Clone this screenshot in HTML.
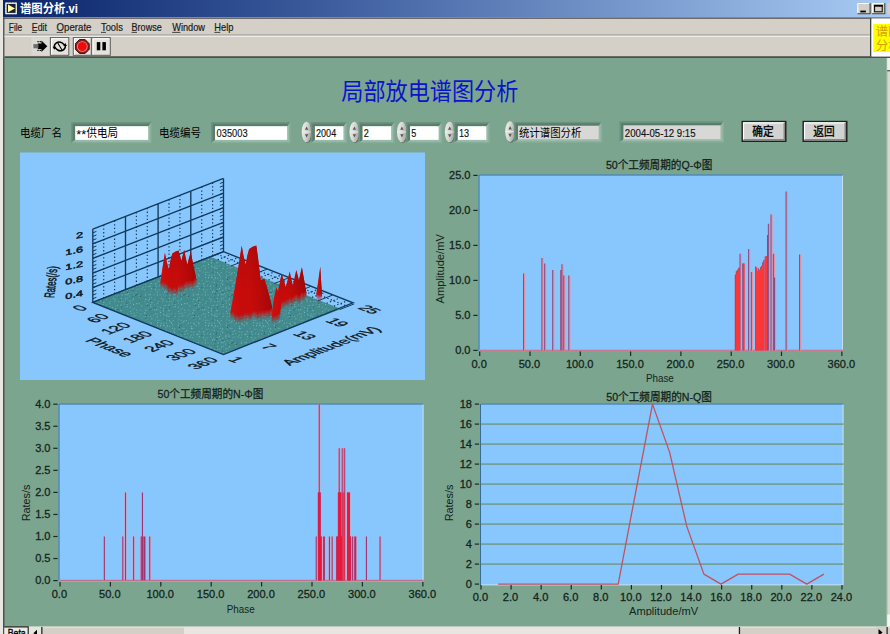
<!DOCTYPE html>
<html><head><meta charset="utf-8"><title>LabVIEW</title>
<style>
html,body{margin:0;padding:0;width:890px;height:634px;overflow:hidden;background:#7ca58f;}
svg{display:block;font-family:"Liberation Sans",sans-serif;}
</style></head><body>
<svg width="890" height="634" viewBox="0 0 890 634">
<rect x="0" y="0" width="890" height="634" fill="#7ca58f"/><rect x="0" y="0" width="890" height="58" fill="#d4d0c8"/><rect x="0" y="0" width="3" height="634" fill="#e8e6e0"/><defs><linearGradient id="tb" x1="0" x2="1" y1="0" y2="0"><stop offset="0" stop-color="#0a246a"/><stop offset="0.35" stop-color="#3a5a9c"/><stop offset="1" stop-color="#a8ccf4"/></linearGradient></defs><rect x="3" y="0" width="887" height="17" fill="url(#tb)"/><rect x="3" y="17.5" width="887" height="1.2" fill="#404040"/><rect x="3.2" y="17.5" width="1.2" height="634" fill="#404040"/><rect x="4.5" y="34.6" width="866" height="1" fill="#808080"/><rect x="4.5" y="35.6" width="866" height="1" fill="#ffffff"/><rect x="4.5" y="56.3" width="890" height="1.6" fill="#404040"/><rect x="870" y="18.5" width="1.5" height="38" fill="#404040"/><rect x="871.5" y="18.5" width="20" height="38" fill="#ffffff"/><rect x="873.2" y="24" width="20" height="28" fill="#ffff00"/><text x="875.8" y="35.8" font-size="12.5" fill="#d8a000" font-family="'Liberation Sans','Noto Sans CJK SC',sans-serif">谱图</text><text x="875.8" y="49.6" font-size="12.5" fill="#d8a000" font-family="'Liberation Sans','Noto Sans CJK SC',sans-serif">分析</text><rect x="5.3" y="2.6" width="11.6" height="11.6" fill="#f0ecd0"/><rect x="6.6" y="3.9" width="9.0" height="9.0" fill="#1c1c30"/><rect x="5.8" y="3.1" width="10.6" height="10.6" fill="none" stroke="#f0ecd0" stroke-width="1" stroke-dasharray="2 1"/><path d="M8.0 4.6 L15.0 8.4 L8.0 12.2 Z" fill="#ffffa8"/><text transform="translate(20.00,13.30) scale(1,1.06)" x="0" y="0" font-size="11.5" font-weight="bold" fill="#fff" font-family="'Liberation Sans','Noto Sans CJK SC',sans-serif" textLength="58" lengthAdjust="spacingAndGlyphs">谱图分析.vi</text><rect x="857.3" y="3" width="13.2" height="11.2" fill="#d4d0c8"/><path d="M857.8 14.2 V3.5 H870.5" fill="none" stroke="#fff" stroke-width="1"/><path d="M857.3 13.8 H870.0999999999999 V3" fill="none" stroke="#404040" stroke-width="1.1"/><rect x="860.3" y="10.6" width="5.6" height="1.8" fill="#000"/><rect x="872" y="3" width="13.2" height="11.2" fill="#d4d0c8"/><path d="M872.5 14.2 V3.5 H885.2" fill="none" stroke="#fff" stroke-width="1"/><path d="M872 13.8 H884.8 V3" fill="none" stroke="#404040" stroke-width="1.1"/><rect x="874.6" y="5.4" width="7.6" height="6.4" fill="none" stroke="#000" stroke-width="1"/><rect x="874.1" y="4.9" width="8.6" height="1.8" fill="#000"/><rect x="887.5" y="3" width="3" height="11.2" fill="#d4d0c8"/><text x="8.85" y="30.6" font-size="10.6" fill="#1a1a1a" stroke="#1a1a1a" stroke-width="0.2" textLength="13.4" lengthAdjust="spacingAndGlyphs">File</text><rect x="8.85" y="31.9" width="4.6" height="0.9" fill="#333"/><text x="31.8" y="30.6" font-size="10.6" fill="#1a1a1a" stroke="#1a1a1a" stroke-width="0.2" textLength="15.2" lengthAdjust="spacingAndGlyphs">Edit</text><rect x="31.8" y="31.9" width="5.0" height="0.9" fill="#333"/><text x="56.6" y="30.6" font-size="10.6" fill="#1a1a1a" stroke="#1a1a1a" stroke-width="0.2" textLength="34.9" lengthAdjust="spacingAndGlyphs">Operate</text><rect x="56.6" y="31.9" width="6.6" height="0.9" fill="#333"/><text x="101" y="30.6" font-size="10.6" fill="#1a1a1a" stroke="#1a1a1a" stroke-width="0.2" textLength="21.8" lengthAdjust="spacingAndGlyphs">Tools</text><rect x="101" y="31.9" width="5.0" height="0.9" fill="#333"/><text x="131.6" y="30.6" font-size="10.6" fill="#1a1a1a" stroke="#1a1a1a" stroke-width="0.2" textLength="30.1" lengthAdjust="spacingAndGlyphs">Browse</text><rect x="131.6" y="31.9" width="5.4" height="0.9" fill="#333"/><text x="172.2" y="30.6" font-size="10.6" fill="#1a1a1a" stroke="#1a1a1a" stroke-width="0.2" textLength="32.8" lengthAdjust="spacingAndGlyphs">Window</text><rect x="172.2" y="31.9" width="8.2" height="0.9" fill="#333"/><text x="214.3" y="30.6" font-size="10.6" fill="#1a1a1a" stroke="#1a1a1a" stroke-width="0.2" textLength="19.2" lengthAdjust="spacingAndGlyphs">Help</text><rect x="214.3" y="31.9" width="6.0" height="0.9" fill="#333"/><rect x="31.6" y="37.6" width="17.8" height="17.6" fill="#dcd9d2"/><path d="M37.8 43.4 h3.6 v-3.0 l5.9 5.8 l-5.9 5.8 v-3.0 h-3.6 z" fill="#000"/><path d="M37.4 41.6 h3.6 M37.4 50.4 h3.6" stroke="#000" stroke-width="1.2" stroke-dasharray="1.3 0.9"/><rect x="33.4" y="44.1" width="5" height="4.2" fill="#6c6c6c"/><rect x="50.4" y="37.6" width="18.4" height="17.7" fill="#e6e3dc" stroke="#5c5c5c" stroke-width="1"/><path d="M51.6 54.4 V38.8 H67.8" fill="none" stroke="#fff" stroke-width="1.1"/><g transform="translate(59.8,46.4)" fill="none" stroke="#000" stroke-width="1.5"><path d="M-5.6 0.6 C-5.6 -3.6 -1.4 -5.6 2.2 -3.6 L5.2 -1.0"/><path d="M5.6 -0.6 C5.6 3.6 1.4 5.6 -2.2 3.6 L-5.2 1.0"/><path d="M-2.6 -4.4 L2.6 4.4" stroke-width="1.1"/><path d="M-7.2 0.4 l1.7 2.9 l2 -2.9 z M7.2 -0.4 l-1.7 -2.9 l-2 2.9 z" fill="#000" stroke="none"/></g><rect x="73.3" y="37.6" width="18" height="17.7" fill="#e6e3dc" stroke="#5c5c5c" stroke-width="1"/><path d="M74.5 54.4 V38.8 H90.3" fill="none" stroke="#fff" stroke-width="1.1"/><path d="M79.45 39.6 h5.7 l4.05 4.05 v5.7 l-4.05 4.05 h-5.7 l-4.05 -4.05 v-5.7 z" fill="#8c2020" stroke="#3c1010" stroke-width="1"/><circle cx="82.3" cy="46.5" r="5.3" fill="#d89890"/><circle cx="82.3" cy="46.5" r="4.5" fill="#f00a0a"/><rect x="91.8" y="37.6" width="18.5" height="17.7" fill="#e6e3dc" stroke="#5c5c5c" stroke-width="1"/><path d="M93.0 54.4 V38.8 H109.3" fill="none" stroke="#fff" stroke-width="1.1"/><rect x="96.8" y="42.1" width="3.5" height="8.2" fill="#000"/><rect x="102.4" y="42.1" width="3.5" height="8.2" fill="#000"/><rect x="887.2" y="58" width="4" height="634" fill="#d6d8d0"/><rect x="886.4" y="58" width="0.9" height="634" fill="#a4c0b0"/><rect x="887.2" y="58" width="3" height="12.3" fill="#eeeeea"/><rect x="887.2" y="70.2" width="3" height="1.1" fill="#404040"/><rect x="887.2" y="614.5" width="3" height="12" fill="#f4f4f0"/><rect x="4.5" y="626.6" width="890" height="8" fill="#d4d0c8"/><rect x="28" y="626.6" width="890" height="0.9" fill="#ecebe6"/><rect x="184" y="627.2" width="555" height="7" fill="#e9e6e1"/><rect x="4.5" y="627.4" width="23.6" height="8" fill="#ecebe6"/><path d="M4.2 626.9 H28.2 V635" fill="none" stroke="#2a2a2a" stroke-width="1.2"/><text x="7.7" y="636.8" font-size="10.8" fill="#000" stroke="#000" stroke-width="0.35" textLength="18.0" lengthAdjust="spacingAndGlyphs">Beta</text><rect x="29" y="627.2" width="12" height="8" fill="#e4e6e0"/><rect x="41.2" y="627" width="1.3" height="8" fill="#2a2a2a"/><path d="M37 629.8 l-3.6 3.4 l3.6 3.4 z" fill="#000"/><rect x="738.8" y="627" width="1.3" height="7.5" fill="#202020"/><rect x="876" y="627" width="11" height="7.5" fill="#d4d0c8"/><path d="M878.5 629 l4 3.5 l-4 3.5 z" fill="#000"/><rect x="886.5" y="627" width="1.2" height="7.5" fill="#202020"/><defs><linearGradient id="spg" x1="0" x2="1" y1="0" y2="0.3"><stop offset="0" stop-color="#f2f2f0"/><stop offset="0.55" stop-color="#d6d6d2"/><stop offset="1" stop-color="#a8aaa6"/></linearGradient></defs><text transform="translate(341.30,100.00) scale(1,1.1)" x="0" y="0" font-size="22" fill="#0a14cc" font-family="'Liberation Sans','Noto Sans CJK SC',sans-serif" textLength="177" lengthAdjust="spacingAndGlyphs">局部放电谱图分析</text><text transform="translate(20.00,137.00) scale(1,1.13)" x="0" y="0" font-size="10.5" fill="#000" font-family="'Liberation Sans','Noto Sans CJK SC',sans-serif">电缆厂名</text><path d="M71.9 142.5 L71.9 122.9 L150.89999999999998 122.9 L148.2 126.2 L75.2 126.2 L75.2 139.9 Z" fill="#587e6e"/><path d="M71.9 142.5 L150.89999999999998 142.5 L150.89999999999998 122.9 L148.2 126.2 L148.2 139.9 L75.2 139.9 Z" fill="#98bca9"/><path d="M71.9 142.5 V122.9 H150.89999999999998" fill="none" stroke="#6c937f" stroke-width="1.6"/><path d="M71.9 142.5 H150.89999999999998 V122.9" fill="none" stroke="#86ad99" stroke-width="1.6"/><rect x="75.2" y="126.2" width="73" height="13.7" fill="#fff"/><text x="76.3" y="139.2" font-size="12.8" fill="#000">**</text><text transform="translate(86.60,137.00) scale(1,1.13)" x="0" y="0" font-size="10.5" fill="#000" font-family="'Liberation Sans','Noto Sans CJK SC',sans-serif">供电局</text><text transform="translate(159.00,137.00) scale(1,1.13)" x="0" y="0" font-size="10.5" fill="#000" font-family="'Liberation Sans','Noto Sans CJK SC',sans-serif">电缆编号</text><path d="M211.79999999999998 142.5 L211.79999999999998 122.9 L289.9 122.9 L287.2 126.2 L215.1 126.2 L215.1 139.9 Z" fill="#587e6e"/><path d="M211.79999999999998 142.5 L289.9 142.5 L289.9 122.9 L287.2 126.2 L287.2 139.9 L215.1 139.9 Z" fill="#98bca9"/><path d="M211.79999999999998 142.5 V122.9 H289.9" fill="none" stroke="#6c937f" stroke-width="1.6"/><path d="M211.79999999999998 142.5 H289.9 V122.9" fill="none" stroke="#86ad99" stroke-width="1.6"/><rect x="215.1" y="126.2" width="72.1" height="13.7" fill="#fff"/><text x="216.6" y="136.9" font-size="11.2" fill="#111" stroke="#111" stroke-width="0.15" textLength="31" lengthAdjust="spacingAndGlyphs">035003</text><ellipse cx="307.29999999999995" cy="132.8" rx="4.9" ry="10.3" fill="#4e6a5e"/><ellipse cx="306.59999999999997" cy="132.0" rx="4.9" ry="10.3" fill="url(#spg)"/><path d="M304.9 129.8 l1.7 -3.4 l1.7 3.4 z M304.9 134.2 l1.7 3.4 l1.7 -3.4 z" fill="#585858"/><path d="M302.2 132.0 h8.8" stroke="#f4f4f4" stroke-width="0.8"/><path d="M311.59999999999997 142.5 L311.59999999999997 122.9 L346.2 122.9 L343.5 126.2 L314.9 126.2 L314.9 139.9 Z" fill="#587e6e"/><path d="M311.59999999999997 142.5 L346.2 142.5 L346.2 122.9 L343.5 126.2 L343.5 139.9 L314.9 139.9 Z" fill="#98bca9"/><path d="M311.59999999999997 142.5 V122.9 H346.2" fill="none" stroke="#6c937f" stroke-width="1.6"/><path d="M311.59999999999997 142.5 H346.2 V122.9" fill="none" stroke="#86ad99" stroke-width="1.6"/><rect x="314.9" y="126.2" width="28.6" height="13.7" fill="#fff"/><text x="316.0" y="136.9" font-size="11.2" fill="#111" stroke="#111" stroke-width="0.15" textLength="20.2" lengthAdjust="spacingAndGlyphs">2004</text><ellipse cx="355.09999999999997" cy="132.8" rx="4.9" ry="10.3" fill="#4e6a5e"/><ellipse cx="354.4" cy="132.0" rx="4.9" ry="10.3" fill="url(#spg)"/><path d="M352.7 129.8 l1.7 -3.4 l1.7 3.4 z M352.7 134.2 l1.7 3.4 l1.7 -3.4 z" fill="#585858"/><path d="M350.0 132.0 h8.8" stroke="#f4f4f4" stroke-width="0.8"/><path d="M359.3 142.5 L359.3 122.9 L393.90000000000003 122.9 L391.20000000000005 126.2 L362.6 126.2 L362.6 139.9 Z" fill="#587e6e"/><path d="M359.3 142.5 L393.90000000000003 142.5 L393.90000000000003 122.9 L391.20000000000005 126.2 L391.20000000000005 139.9 L362.6 139.9 Z" fill="#98bca9"/><path d="M359.3 142.5 V122.9 H393.90000000000003" fill="none" stroke="#6c937f" stroke-width="1.6"/><path d="M359.3 142.5 H393.90000000000003 V122.9" fill="none" stroke="#86ad99" stroke-width="1.6"/><rect x="362.6" y="126.2" width="28.6" height="13.7" fill="#fff"/><text x="363.70000000000005" y="136.9" font-size="11.2" fill="#111" stroke="#111" stroke-width="0.15" textLength="5.05" lengthAdjust="spacingAndGlyphs">2</text><ellipse cx="402.59999999999997" cy="132.8" rx="4.9" ry="10.3" fill="#4e6a5e"/><ellipse cx="401.9" cy="132.0" rx="4.9" ry="10.3" fill="url(#spg)"/><path d="M400.2 129.8 l1.7 -3.4 l1.7 3.4 z M400.2 134.2 l1.7 3.4 l1.7 -3.4 z" fill="#585858"/><path d="M397.5 132.0 h8.8" stroke="#f4f4f4" stroke-width="0.8"/><path d="M406.8 142.5 L406.8 122.9 L441.40000000000003 122.9 L438.70000000000005 126.2 L410.1 126.2 L410.1 139.9 Z" fill="#587e6e"/><path d="M406.8 142.5 L441.40000000000003 142.5 L441.40000000000003 122.9 L438.70000000000005 126.2 L438.70000000000005 139.9 L410.1 139.9 Z" fill="#98bca9"/><path d="M406.8 142.5 V122.9 H441.40000000000003" fill="none" stroke="#6c937f" stroke-width="1.6"/><path d="M406.8 142.5 H441.40000000000003 V122.9" fill="none" stroke="#86ad99" stroke-width="1.6"/><rect x="410.1" y="126.2" width="28.6" height="13.7" fill="#fff"/><text x="411.20000000000005" y="136.9" font-size="11.2" fill="#111" stroke="#111" stroke-width="0.15" textLength="5.05" lengthAdjust="spacingAndGlyphs">5</text><ellipse cx="450.4" cy="132.8" rx="4.9" ry="10.3" fill="#4e6a5e"/><ellipse cx="449.7" cy="132.0" rx="4.9" ry="10.3" fill="url(#spg)"/><path d="M448.0 129.8 l1.7 -3.4 l1.7 3.4 z M448.0 134.2 l1.7 3.4 l1.7 -3.4 z" fill="#585858"/><path d="M445.3 132.0 h8.8" stroke="#f4f4f4" stroke-width="0.8"/><path d="M454.5 142.5 L454.5 122.9 L489.1 122.9 L486.40000000000003 126.2 L457.8 126.2 L457.8 139.9 Z" fill="#587e6e"/><path d="M454.5 142.5 L489.1 142.5 L489.1 122.9 L486.40000000000003 126.2 L486.40000000000003 139.9 L457.8 139.9 Z" fill="#98bca9"/><path d="M454.5 142.5 V122.9 H489.1" fill="none" stroke="#6c937f" stroke-width="1.6"/><path d="M454.5 142.5 H489.1 V122.9" fill="none" stroke="#86ad99" stroke-width="1.6"/><rect x="457.8" y="126.2" width="28.6" height="13.7" fill="#fff"/><text x="458.90000000000003" y="136.9" font-size="11.2" fill="#111" stroke="#111" stroke-width="0.15" textLength="10.1" lengthAdjust="spacingAndGlyphs">13</text><ellipse cx="510.79999999999995" cy="132.4" rx="4.9" ry="10.3" fill="#4e6a5e"/><ellipse cx="510.09999999999997" cy="131.6" rx="4.9" ry="10.3" fill="url(#spg)"/><path d="M508.4 129.4 l1.7 -3.4 l1.7 3.4 z M508.4 133.79999999999998 l1.7 3.4 l1.7 -3.4 z" fill="#585858"/><path d="M505.7 131.6 h8.8" stroke="#f4f4f4" stroke-width="0.8"/><path d="M514.7 142.0 L514.7 122.5 L601.5 122.5 L598.8 125.8 L518 125.8 L518 139.4 Z" fill="#587e6e"/><path d="M514.7 142.0 L601.5 142.0 L601.5 122.5 L598.8 125.8 L598.8 139.4 L518 139.4 Z" fill="#98bca9"/><path d="M514.7 142.0 V122.5 H601.5" fill="none" stroke="#6c937f" stroke-width="1.6"/><path d="M514.7 142.0 H601.5 V122.5" fill="none" stroke="#86ad99" stroke-width="1.6"/><rect x="518" y="125.8" width="80.8" height="13.6" fill="#d8d8d6"/><text transform="translate(519.00,137.00) scale(1,1.13)" x="0" y="0" font-size="10.4" fill="#000" font-family="'Liberation Sans','Noto Sans CJK SC',sans-serif">统计谱图分析</text><path d="M620.2 141.9 L620.2 122.10000000000001 L723.3000000000001 122.10000000000001 L720.6 125.4 L623.5 125.4 L623.5 139.3 Z" fill="#587e6e"/><path d="M620.2 141.9 L723.3000000000001 141.9 L723.3000000000001 122.10000000000001 L720.6 125.4 L720.6 139.3 L623.5 139.3 Z" fill="#98bca9"/><path d="M620.2 141.9 V122.10000000000001 H723.3000000000001" fill="none" stroke="#6c937f" stroke-width="1.6"/><path d="M620.2 141.9 H723.3000000000001 V122.10000000000001" fill="none" stroke="#86ad99" stroke-width="1.6"/><rect x="623.5" y="125.4" width="97.1" height="13.9" fill="#d8d8d6"/><text x="624.8" y="136.7" font-size="11.2" fill="#111" stroke="#111" stroke-width="0.15" textLength="70.8" lengthAdjust="spacingAndGlyphs">2004-05-12 9:15</text><rect x="741.5" y="120.8" width="45" height="21.2" fill="#202020"/><rect x="743" y="122.3" width="42" height="18.2" fill="#d2d2d0"/><path d="M743.5 140.0 V122.8 H784.5" fill="none" stroke="#fff" stroke-width="1.2"/><path d="M743.5 139.8 H784.3 V122.8" fill="none" stroke="#888" stroke-width="1.6"/><text transform="translate(752.20,136.00) scale(1,1.12)" x="0" y="0" font-size="10.7" fill="#000" stroke="#000" stroke-width="0.3" font-family="'Liberation Sans','Noto Sans CJK SC',sans-serif">确定</text><rect x="802.5" y="120.8" width="45" height="21.2" fill="#202020"/><rect x="804" y="122.3" width="42" height="18.2" fill="#d2d2d0"/><path d="M804.5 140.0 V122.8 H845.5" fill="none" stroke="#fff" stroke-width="1.2"/><path d="M804.5 139.8 H845.3 V122.8" fill="none" stroke="#888" stroke-width="1.6"/><text transform="translate(813.20,136.00) scale(1,1.12)" x="0" y="0" font-size="10.7" fill="#000" stroke="#000" stroke-width="0.3" font-family="'Liberation Sans','Noto Sans CJK SC',sans-serif">返回</text><rect x="478.5" y="174.5" width="364.5" height="176.3" fill="#88c7fe"/><path d="M479.0 350.8 V175.0 H843" fill="none" stroke="#376c92" stroke-width="1"/><path d="M479.5 350.3 H842.5 V175.5" fill="none" stroke="#c4dcf0" stroke-width="1"/><text transform="translate(605.89,169.00) scale(1,1.08)" x="0" y="0" font-size="10.3" fill="#14241c" stroke="#14241c" stroke-width="0.25" font-family="'Liberation Sans','Noto Sans CJK SC',sans-serif" textLength="106.4" lengthAdjust="spacingAndGlyphs">50个工频周期的Q-Φ图</text><rect x="479.7" y="349.59999999999997" width="363.3" height="1.5" fill="#c87a90"/><path d="M523.06 350.4V273.4h2.1V350.4zM541.47 350.4V258.0h2.1V350.4zM544.19 350.4V263.6h2.1V350.4zM552.24 350.4V269.9h2.1V350.4zM560.29 350.4V269.9h2.1V350.4zM561.49 350.4V264.3h2.1V350.4zM563.30 350.4V275.5h2.1V350.4zM568.33 350.4V275.5h2.1V350.4zM734.83 350.4V274.8h2.1V350.4zM735.83 350.4V271.3h2.1V350.4zM736.84 350.4V269.9h2.1V350.4zM737.85 350.4V268.5h2.1V350.4zM738.65 350.4V267.8h2.1V350.4zM739.56 350.4V253.8h2.1V350.4zM742.27 350.4V263.6h2.1V350.4zM743.28 350.4V263.6h2.1V350.4zM748.11 350.4V248.9h2.1V350.4zM750.92 350.4V272.0h2.1V350.4zM755.15 350.4V266.4h2.1V350.4zM756.15 350.4V267.8h2.1V350.4zM757.16 350.4V271.3h2.1V350.4zM758.17 350.4V268.5h2.1V350.4zM759.17 350.4V269.9h2.1V350.4zM760.18 350.4V267.1h2.1V350.4zM761.18 350.4V265.7h2.1V350.4zM762.19 350.4V262.2h2.1V350.4zM763.30 350.4V260.1h2.1V350.4zM764.71 350.4V256.6h2.1V350.4zM765.91 350.4V255.9h2.1V350.4zM767.02 350.4V234.9h2.1V350.4zM767.92 350.4V223.7h2.1V350.4zM770.54 350.4V214.6h2.1V350.4zM772.95 350.4V253.8h2.1V350.4zM774.06 350.4V277.6h2.1V350.4zM785.63 350.4V191.5h2.1V350.4zM799.11 350.4V254.5h2.1V350.4z" fill="#ea8ea2" opacity="1"/><path d="M523.01 350.4V273.4h1.0V350.4zM541.42 350.4V258.0h1.0V350.4zM544.14 350.4V263.6h1.0V350.4zM552.19 350.4V269.9h1.0V350.4zM560.24 350.4V269.9h1.0V350.4zM561.44 350.4V264.3h1.0V350.4zM563.25 350.4V275.5h1.0V350.4zM568.28 350.4V275.5h1.0V350.4zM734.78 350.4V274.8h1.0V350.4zM735.78 350.4V271.3h1.0V350.4zM736.79 350.4V269.9h1.0V350.4zM737.79 350.4V268.5h1.0V350.4zM738.60 350.4V267.8h1.0V350.4zM739.51 350.4V253.8h1.0V350.4zM742.22 350.4V263.6h1.0V350.4zM743.23 350.4V263.6h1.0V350.4zM748.06 350.4V248.9h1.0V350.4zM750.87 350.4V272.0h1.0V350.4zM755.10 350.4V266.4h1.0V350.4zM756.10 350.4V267.8h1.0V350.4zM757.11 350.4V271.3h1.0V350.4zM758.12 350.4V268.5h1.0V350.4zM759.12 350.4V269.9h1.0V350.4zM760.13 350.4V267.1h1.0V350.4zM761.13 350.4V265.7h1.0V350.4zM762.14 350.4V262.2h1.0V350.4zM763.25 350.4V260.1h1.0V350.4zM764.66 350.4V256.6h1.0V350.4zM765.86 350.4V255.9h1.0V350.4zM766.97 350.4V234.9h1.0V350.4zM767.87 350.4V223.7h1.0V350.4zM770.49 350.4V214.6h1.0V350.4zM772.90 350.4V253.8h1.0V350.4zM774.01 350.4V277.6h1.0V350.4zM785.58 350.4V191.5h1.0V350.4zM799.06 350.4V254.5h1.0V350.4z" fill="#805088" opacity="1"/><path d="M735.66 350.4V274.1h1.35V350.4zM736.66 350.4V271.3h1.35V350.4zM737.67 350.4V269.9h1.35V350.4zM738.57 350.4V268.5h1.35V350.4zM743.10 350.4V263.6h1.35V350.4zM755.98 350.4V267.8h1.35V350.4zM756.98 350.4V271.3h1.35V350.4zM757.99 350.4V271.3h1.35V350.4zM758.99 350.4V269.9h1.35V350.4zM760.00 350.4V269.9h1.35V350.4zM761.01 350.4V267.1h1.35V350.4zM762.01 350.4V265.7h1.35V350.4zM763.02 350.4V262.2h1.35V350.4zM765.63 350.4V256.6h1.35V350.4z" fill="#ff3636" opacity="1"/><rect x="479.10" y="351.5" width="1.2" height="4.5" fill="#1a2a22"/><text x="0" y="0" font-size="11.5" fill="#14241c" text-anchor="middle" stroke="#14241c" stroke-width="0.3" transform="translate(479.1,367.5) scale(0.96,1)">0.0</text><rect x="529.40" y="351.5" width="1.2" height="4.5" fill="#1a2a22"/><text x="0" y="0" font-size="11.5" fill="#14241c" text-anchor="middle" stroke="#14241c" stroke-width="0.3" transform="translate(529.4,367.5) scale(0.96,1)">50.0</text><rect x="579.70" y="351.5" width="1.2" height="4.5" fill="#1a2a22"/><text x="0" y="0" font-size="11.5" fill="#14241c" text-anchor="middle" stroke="#14241c" stroke-width="0.3" transform="translate(579.7,367.5) scale(0.96,1)">100.0</text><rect x="630.00" y="351.5" width="1.2" height="4.5" fill="#1a2a22"/><text x="0" y="0" font-size="11.5" fill="#14241c" text-anchor="middle" stroke="#14241c" stroke-width="0.3" transform="translate(630.0,367.5) scale(0.96,1)">150.0</text><rect x="680.30" y="351.5" width="1.2" height="4.5" fill="#1a2a22"/><text x="0" y="0" font-size="11.5" fill="#14241c" text-anchor="middle" stroke="#14241c" stroke-width="0.3" transform="translate(680.3,367.5) scale(0.96,1)">200.0</text><rect x="730.60" y="351.5" width="1.2" height="4.5" fill="#1a2a22"/><text x="0" y="0" font-size="11.5" fill="#14241c" text-anchor="middle" stroke="#14241c" stroke-width="0.3" transform="translate(730.6,367.5) scale(0.96,1)">250.0</text><rect x="780.90" y="351.5" width="1.2" height="4.5" fill="#1a2a22"/><text x="0" y="0" font-size="11.5" fill="#14241c" text-anchor="middle" stroke="#14241c" stroke-width="0.3" transform="translate(780.9,367.5) scale(0.96,1)">300.0</text><rect x="841.26" y="351.5" width="1.2" height="4.5" fill="#1a2a22"/><text x="0" y="0" font-size="11.5" fill="#14241c" text-anchor="middle" stroke="#14241c" stroke-width="0.3" transform="translate(841.3,367.5) scale(0.96,1)">360.0</text><rect x="473.3" y="349.80" width="4.3" height="1.2" fill="#1a2a22"/><text x="0" y="0" font-size="11.5" fill="#14241c" text-anchor="end" stroke="#14241c" stroke-width="0.3" transform="translate(470.5,354.1) scale(0.96,1)">0.0</text><rect x="473.3" y="314.80" width="4.3" height="1.2" fill="#1a2a22"/><text x="0" y="0" font-size="11.5" fill="#14241c" text-anchor="end" stroke="#14241c" stroke-width="0.3" transform="translate(470.5,319.1) scale(0.96,1)">5.0</text><rect x="473.3" y="279.80" width="4.3" height="1.2" fill="#1a2a22"/><text x="0" y="0" font-size="11.5" fill="#14241c" text-anchor="end" stroke="#14241c" stroke-width="0.3" transform="translate(470.5,284.1) scale(0.96,1)">10.0</text><rect x="473.3" y="244.80" width="4.3" height="1.2" fill="#1a2a22"/><text x="0" y="0" font-size="11.5" fill="#14241c" text-anchor="end" stroke="#14241c" stroke-width="0.3" transform="translate(470.5,249.1) scale(0.96,1)">15.0</text><rect x="473.3" y="209.80" width="4.3" height="1.2" fill="#1a2a22"/><text x="0" y="0" font-size="11.5" fill="#14241c" text-anchor="end" stroke="#14241c" stroke-width="0.3" transform="translate(470.5,214.1) scale(0.96,1)">20.0</text><rect x="473.3" y="174.80" width="4.3" height="1.2" fill="#1a2a22"/><text x="0" y="0" font-size="11.5" fill="#14241c" text-anchor="end" stroke="#14241c" stroke-width="0.3" transform="translate(470.5,179.1) scale(0.96,1)">25.0</text><text x="645.9" y="381.7" font-size="11.4" fill="#14241c" textLength="27.9" lengthAdjust="spacingAndGlyphs">Phase</text><text x="0" y="0" font-size="11.15" fill="#14241c" text-anchor="middle" transform="translate(443.6,268.8) rotate(-90)">Amplitude/mV</text><rect x="58.5" y="403.5" width="365.0" height="177.79999999999995" fill="#88c7fe"/><path d="M59.0 581.3 V404.0 H423.5" fill="none" stroke="#376c92" stroke-width="1"/><path d="M59.5 580.8 H423.0 V404.5" fill="none" stroke="#c4dcf0" stroke-width="1"/><text transform="translate(157.49,398.10) scale(1,1.08)" x="0" y="0" font-size="10.3" fill="#14241c" stroke="#14241c" stroke-width="0.25" font-family="'Liberation Sans','Noto Sans CJK SC',sans-serif" textLength="105.8" lengthAdjust="spacingAndGlyphs">50个工频周期的N-Φ图</text><rect x="60" y="579.8000000000001" width="363.5" height="1.5" fill="#c0708c"/><path d="M103.20 580.6V536.5h2.3V580.6zM121.65 580.6V536.5h2.3V580.6zM124.37 580.6V492.4h2.3V580.6zM132.43 580.6V536.5h2.3V580.6zM140.09 580.6V536.5h2.3V580.6zM141.30 580.6V492.4h2.3V580.6zM142.72 580.6V536.5h2.3V580.6zM143.72 580.6V536.5h2.3V580.6zM148.56 580.6V536.5h2.3V580.6zM315.08 580.6V536.5h2.3V580.6zM317.20 580.6V492.4h2.3V580.6zM318.11 580.6V404.2h2.3V580.6zM319.12 580.6V492.4h2.3V580.6zM320.12 580.6V536.5h2.3V580.6zM322.44 580.6V536.5h2.3V580.6zM323.25 580.6V536.5h2.3V580.6zM328.29 580.6V536.5h2.3V580.6zM331.01 580.6V536.5h2.3V580.6zM335.55 580.6V536.5h2.3V580.6zM336.35 580.6V536.5h2.3V580.6zM337.26 580.6V492.4h2.3V580.6zM338.07 580.6V448.3h2.3V580.6zM338.87 580.6V492.4h2.3V580.6zM339.68 580.6V492.4h2.3V580.6zM340.69 580.6V536.5h2.3V580.6zM341.09 580.6V448.3h2.3V580.6zM342.10 580.6V492.4h2.3V580.6zM342.90 580.6V492.4h2.3V580.6zM343.51 580.6V448.3h2.3V580.6zM346.43 580.6V492.4h2.3V580.6zM347.34 580.6V492.4h2.3V580.6zM348.35 580.6V492.4h2.3V580.6zM349.46 580.6V536.5h2.3V580.6zM351.47 580.6V536.5h2.3V580.6zM353.59 580.6V536.5h2.3V580.6zM354.60 580.6V536.5h2.3V580.6zM365.28 580.6V536.5h2.3V580.6zM378.89 580.6V536.5h2.3V580.6z" fill="#e29ab4" opacity="0.8"/><path d="M103.83 580.6V536.5h1.05V580.6zM122.27 580.6V536.5h1.05V580.6zM124.99 580.6V492.4h1.05V580.6zM133.06 580.6V536.5h1.05V580.6zM140.72 580.6V536.5h1.05V580.6zM141.93 580.6V492.4h1.05V580.6zM143.34 580.6V536.5h1.05V580.6zM144.35 580.6V536.5h1.05V580.6zM149.19 580.6V536.5h1.05V580.6zM315.71 580.6V536.5h1.05V580.6zM317.83 580.6V492.4h1.05V580.6zM318.73 580.6V404.2h1.05V580.6zM319.74 580.6V492.4h1.05V580.6zM320.75 580.6V536.5h1.05V580.6zM323.07 580.6V536.5h1.05V580.6zM323.87 580.6V536.5h1.05V580.6zM328.91 580.6V536.5h1.05V580.6zM331.64 580.6V536.5h1.05V580.6zM336.17 580.6V536.5h1.05V580.6zM336.98 580.6V536.5h1.05V580.6zM337.88 580.6V492.4h1.05V580.6zM338.69 580.6V448.3h1.05V580.6zM339.50 580.6V492.4h1.05V580.6zM340.30 580.6V492.4h1.05V580.6zM341.31 580.6V536.5h1.05V580.6zM341.72 580.6V448.3h1.05V580.6zM342.72 580.6V492.4h1.05V580.6zM343.53 580.6V492.4h1.05V580.6zM344.13 580.6V448.3h1.05V580.6zM347.06 580.6V492.4h1.05V580.6zM347.96 580.6V492.4h1.05V580.6zM348.97 580.6V492.4h1.05V580.6zM350.08 580.6V536.5h1.05V580.6zM352.10 580.6V536.5h1.05V580.6zM354.21 580.6V536.5h1.05V580.6zM355.22 580.6V536.5h1.05V580.6zM365.91 580.6V536.5h1.05V580.6zM379.52 580.6V536.5h1.05V580.6z" fill="#a03470" opacity="1"/><path d="M318.20 580.6V492.4h1.3V580.6zM319.11 580.6V492.4h1.3V580.6zM320.02 580.6V536.5h1.3V580.6zM336.55 580.6V536.5h1.3V580.6zM338.16 580.6V492.4h1.3V580.6zM338.97 580.6V492.4h1.3V580.6zM339.78 580.6V492.4h1.3V580.6zM340.58 580.6V536.5h1.3V580.6zM341.59 580.6V536.5h1.3V580.6zM342.60 580.6V492.4h1.3V580.6zM343.40 580.6V492.4h1.3V580.6zM347.44 580.6V492.4h1.3V580.6zM348.34 580.6V492.4h1.3V580.6zM349.35 580.6V536.5h1.3V580.6z" fill="#ea1838" opacity="1"/><path d="M342.35 580.6V448.3h2.2V580.6z" fill="#d86080" opacity="0.55"/><rect x="59.40" y="582" width="1.2" height="4.5" fill="#1a2a22"/><text x="0" y="0" font-size="11.5" fill="#14241c" text-anchor="middle" stroke="#14241c" stroke-width="0.3" transform="translate(59.4,598) scale(0.96,1)">0.0</text><rect x="109.80" y="582" width="1.2" height="4.5" fill="#1a2a22"/><text x="0" y="0" font-size="11.5" fill="#14241c" text-anchor="middle" stroke="#14241c" stroke-width="0.3" transform="translate(109.8,598) scale(0.96,1)">50.0</text><rect x="160.20" y="582" width="1.2" height="4.5" fill="#1a2a22"/><text x="0" y="0" font-size="11.5" fill="#14241c" text-anchor="middle" stroke="#14241c" stroke-width="0.3" transform="translate(160.2,598) scale(0.96,1)">100.0</text><rect x="210.60" y="582" width="1.2" height="4.5" fill="#1a2a22"/><text x="0" y="0" font-size="11.5" fill="#14241c" text-anchor="middle" stroke="#14241c" stroke-width="0.3" transform="translate(210.6,598) scale(0.96,1)">150.0</text><rect x="261.00" y="582" width="1.2" height="4.5" fill="#1a2a22"/><text x="0" y="0" font-size="11.5" fill="#14241c" text-anchor="middle" stroke="#14241c" stroke-width="0.3" transform="translate(261.0,598) scale(0.96,1)">200.0</text><rect x="311.40" y="582" width="1.2" height="4.5" fill="#1a2a22"/><text x="0" y="0" font-size="11.5" fill="#14241c" text-anchor="middle" stroke="#14241c" stroke-width="0.3" transform="translate(311.4,598) scale(0.96,1)">250.0</text><rect x="361.80" y="582" width="1.2" height="4.5" fill="#1a2a22"/><text x="0" y="0" font-size="11.5" fill="#14241c" text-anchor="middle" stroke="#14241c" stroke-width="0.3" transform="translate(361.8,598) scale(0.96,1)">300.0</text><rect x="422.28" y="582" width="1.2" height="4.5" fill="#1a2a22"/><text x="0" y="0" font-size="11.5" fill="#14241c" text-anchor="middle" stroke="#14241c" stroke-width="0.3" transform="translate(422.3,598) scale(0.96,1)">360.0</text><rect x="53.3" y="580.00" width="4.3" height="1.2" fill="#1a2a22"/><text x="0" y="0" font-size="11.5" fill="#14241c" text-anchor="end" stroke="#14241c" stroke-width="0.3" transform="translate(50.5,584.3) scale(0.96,1)">0.0</text><rect x="53.3" y="557.95" width="4.3" height="1.2" fill="#1a2a22"/><text x="0" y="0" font-size="11.5" fill="#14241c" text-anchor="end" stroke="#14241c" stroke-width="0.3" transform="translate(50.5,562.3) scale(0.96,1)">0.5</text><rect x="53.3" y="535.90" width="4.3" height="1.2" fill="#1a2a22"/><text x="0" y="0" font-size="11.5" fill="#14241c" text-anchor="end" stroke="#14241c" stroke-width="0.3" transform="translate(50.5,540.2) scale(0.96,1)">1.0</text><rect x="53.3" y="513.85" width="4.3" height="1.2" fill="#1a2a22"/><text x="0" y="0" font-size="11.5" fill="#14241c" text-anchor="end" stroke="#14241c" stroke-width="0.3" transform="translate(50.5,518.2) scale(0.96,1)">1.5</text><rect x="53.3" y="491.80" width="4.3" height="1.2" fill="#1a2a22"/><text x="0" y="0" font-size="11.5" fill="#14241c" text-anchor="end" stroke="#14241c" stroke-width="0.3" transform="translate(50.5,496.1) scale(0.96,1)">2.0</text><rect x="53.3" y="469.75" width="4.3" height="1.2" fill="#1a2a22"/><text x="0" y="0" font-size="11.5" fill="#14241c" text-anchor="end" stroke="#14241c" stroke-width="0.3" transform="translate(50.5,474.1) scale(0.96,1)">2.5</text><rect x="53.3" y="447.70" width="4.3" height="1.2" fill="#1a2a22"/><text x="0" y="0" font-size="11.5" fill="#14241c" text-anchor="end" stroke="#14241c" stroke-width="0.3" transform="translate(50.5,452.0) scale(0.96,1)">3.0</text><rect x="53.3" y="425.65" width="4.3" height="1.2" fill="#1a2a22"/><text x="0" y="0" font-size="11.5" fill="#14241c" text-anchor="end" stroke="#14241c" stroke-width="0.3" transform="translate(50.5,429.9) scale(0.96,1)">3.5</text><rect x="53.3" y="403.60" width="4.3" height="1.2" fill="#1a2a22"/><text x="0" y="0" font-size="11.5" fill="#14241c" text-anchor="end" stroke="#14241c" stroke-width="0.3" transform="translate(50.5,407.9) scale(0.96,1)">4.0</text><text x="226.8" y="612.8" font-size="11.4" fill="#14241c" textLength="27.9" lengthAdjust="spacingAndGlyphs">Phase</text><text x="0" y="0" font-size="10.8" fill="#14241c" text-anchor="middle" transform="translate(30.3,503) rotate(-90)">Rates/s</text><rect x="480" y="403.5" width="363.5" height="181.79999999999995" fill="#88c7fe"/><path d="M480.5 585.3 V404.0 H843.5" fill="none" stroke="#376c92" stroke-width="1"/><path d="M481 584.8 H843.0 V404.5" fill="none" stroke="#c4dcf0" stroke-width="1"/><text transform="translate(606.29,400.60) scale(1,1.08)" x="0" y="0" font-size="10.3" fill="#14241c" stroke="#14241c" stroke-width="0.25" font-family="'Liberation Sans','Noto Sans CJK SC',sans-serif" textLength="105.6" lengthAdjust="spacingAndGlyphs">50个工频周期的N-Q图</text><rect x="481" y="563.35" width="362.5" height="1.5" fill="#729a88"/><rect x="481" y="543.35" width="362.5" height="1.5" fill="#729a88"/><rect x="481" y="523.35" width="362.5" height="1.5" fill="#729a88"/><rect x="481" y="503.35" width="362.5" height="1.5" fill="#729a88"/><rect x="481" y="483.35" width="362.5" height="1.5" fill="#729a88"/><rect x="481" y="463.35" width="362.5" height="1.5" fill="#729a88"/><rect x="481" y="443.35" width="362.5" height="1.5" fill="#729a88"/><rect x="481" y="423.35" width="362.5" height="1.5" fill="#729a88"/><polyline points="498.1,584.1 515.3,584.1 532.4,584.1 549.6,584.1 566.7,584.1 583.9,584.1 601.0,584.1 618.2,584.1 635.3,494.1 652.5,404.1 669.6,452.1 686.7,526.1 703.9,574.1 721.0,584.1 738.2,574.1 755.3,574.1 772.5,574.1 789.6,574.1 806.8,584.1 823.9,574.1" fill="none" stroke="#c0525e" stroke-width="1.3" stroke-linejoin="round"/><rect x="480.40" y="585" width="1.2" height="4.5" fill="#1a2a22"/><text x="0" y="0" font-size="11.5" fill="#14241c" text-anchor="middle" stroke="#14241c" stroke-width="0.3" transform="translate(480.4,601) scale(0.96,1)">0.0</text><rect x="510.48" y="585" width="1.2" height="4.5" fill="#1a2a22"/><text x="0" y="0" font-size="11.5" fill="#14241c" text-anchor="middle" stroke="#14241c" stroke-width="0.3" transform="translate(510.5,601) scale(0.96,1)">2.0</text><rect x="540.56" y="585" width="1.2" height="4.5" fill="#1a2a22"/><text x="0" y="0" font-size="11.5" fill="#14241c" text-anchor="middle" stroke="#14241c" stroke-width="0.3" transform="translate(540.6,601) scale(0.96,1)">4.0</text><rect x="570.64" y="585" width="1.2" height="4.5" fill="#1a2a22"/><text x="0" y="0" font-size="11.5" fill="#14241c" text-anchor="middle" stroke="#14241c" stroke-width="0.3" transform="translate(570.6,601) scale(0.96,1)">6.0</text><rect x="600.72" y="585" width="1.2" height="4.5" fill="#1a2a22"/><text x="0" y="0" font-size="11.5" fill="#14241c" text-anchor="middle" stroke="#14241c" stroke-width="0.3" transform="translate(600.7,601) scale(0.96,1)">8.0</text><rect x="630.80" y="585" width="1.2" height="4.5" fill="#1a2a22"/><text x="0" y="0" font-size="11.5" fill="#14241c" text-anchor="middle" stroke="#14241c" stroke-width="0.3" transform="translate(630.8,601) scale(0.96,1)">10.0</text><rect x="660.88" y="585" width="1.2" height="4.5" fill="#1a2a22"/><text x="0" y="0" font-size="11.5" fill="#14241c" text-anchor="middle" stroke="#14241c" stroke-width="0.3" transform="translate(660.9,601) scale(0.96,1)">12.0</text><rect x="690.96" y="585" width="1.2" height="4.5" fill="#1a2a22"/><text x="0" y="0" font-size="11.5" fill="#14241c" text-anchor="middle" stroke="#14241c" stroke-width="0.3" transform="translate(691.0,601) scale(0.96,1)">14.0</text><rect x="721.04" y="585" width="1.2" height="4.5" fill="#1a2a22"/><text x="0" y="0" font-size="11.5" fill="#14241c" text-anchor="middle" stroke="#14241c" stroke-width="0.3" transform="translate(721.0,601) scale(0.96,1)">16.0</text><rect x="751.12" y="585" width="1.2" height="4.5" fill="#1a2a22"/><text x="0" y="0" font-size="11.5" fill="#14241c" text-anchor="middle" stroke="#14241c" stroke-width="0.3" transform="translate(751.1,601) scale(0.96,1)">18.0</text><rect x="781.20" y="585" width="1.2" height="4.5" fill="#1a2a22"/><text x="0" y="0" font-size="11.5" fill="#14241c" text-anchor="middle" stroke="#14241c" stroke-width="0.3" transform="translate(781.2,601) scale(0.96,1)">20.0</text><rect x="811.28" y="585" width="1.2" height="4.5" fill="#1a2a22"/><text x="0" y="0" font-size="11.5" fill="#14241c" text-anchor="middle" stroke="#14241c" stroke-width="0.3" transform="translate(811.3,601) scale(0.96,1)">22.0</text><rect x="841.36" y="585" width="1.2" height="4.5" fill="#1a2a22"/><text x="0" y="0" font-size="11.5" fill="#14241c" text-anchor="middle" stroke="#14241c" stroke-width="0.3" transform="translate(841.4,601) scale(0.96,1)">24.0</text><rect x="474.8" y="583.50" width="4.3" height="1.2" fill="#1a2a22"/><text x="0" y="0" font-size="11.5" fill="#14241c" text-anchor="end" stroke="#14241c" stroke-width="0.3" transform="translate(472,587.8) scale(0.96,1)">0</text><rect x="474.8" y="563.50" width="4.3" height="1.2" fill="#1a2a22"/><text x="0" y="0" font-size="11.5" fill="#14241c" text-anchor="end" stroke="#14241c" stroke-width="0.3" transform="translate(472,567.8) scale(0.96,1)">2</text><rect x="474.8" y="543.50" width="4.3" height="1.2" fill="#1a2a22"/><text x="0" y="0" font-size="11.5" fill="#14241c" text-anchor="end" stroke="#14241c" stroke-width="0.3" transform="translate(472,547.8) scale(0.96,1)">4</text><rect x="474.8" y="523.50" width="4.3" height="1.2" fill="#1a2a22"/><text x="0" y="0" font-size="11.5" fill="#14241c" text-anchor="end" stroke="#14241c" stroke-width="0.3" transform="translate(472,527.8) scale(0.96,1)">6</text><rect x="474.8" y="503.50" width="4.3" height="1.2" fill="#1a2a22"/><text x="0" y="0" font-size="11.5" fill="#14241c" text-anchor="end" stroke="#14241c" stroke-width="0.3" transform="translate(472,507.8) scale(0.96,1)">8</text><rect x="474.8" y="483.50" width="4.3" height="1.2" fill="#1a2a22"/><text x="0" y="0" font-size="11.5" fill="#14241c" text-anchor="end" stroke="#14241c" stroke-width="0.3" transform="translate(472,487.8) scale(0.96,1)">10</text><rect x="474.8" y="463.50" width="4.3" height="1.2" fill="#1a2a22"/><text x="0" y="0" font-size="11.5" fill="#14241c" text-anchor="end" stroke="#14241c" stroke-width="0.3" transform="translate(472,467.8) scale(0.96,1)">12</text><rect x="474.8" y="443.50" width="4.3" height="1.2" fill="#1a2a22"/><text x="0" y="0" font-size="11.5" fill="#14241c" text-anchor="end" stroke="#14241c" stroke-width="0.3" transform="translate(472,447.8) scale(0.96,1)">14</text><rect x="474.8" y="423.50" width="4.3" height="1.2" fill="#1a2a22"/><text x="0" y="0" font-size="11.5" fill="#14241c" text-anchor="end" stroke="#14241c" stroke-width="0.3" transform="translate(472,427.8) scale(0.96,1)">16</text><rect x="474.8" y="403.50" width="4.3" height="1.2" fill="#1a2a22"/><text x="0" y="0" font-size="11.5" fill="#14241c" text-anchor="end" stroke="#14241c" stroke-width="0.3" transform="translate(472,407.8) scale(0.96,1)">18</text><text x="663.6" y="614.7" font-size="11.1" fill="#14241c" text-anchor="middle" >Amplitude/mV</text><rect x="625" y="615.7" width="80" height="4" fill="#7ca58f"/><text x="0" y="0" font-size="10.8" fill="#14241c" text-anchor="middle" transform="translate(452.8,503) rotate(-90)">Rates/s</text><rect x="20" y="152.5" width="405" height="227.5" fill="#88c7fe"/><path d="M92.8,302.4L223.5,251.7M92.8,287.7L223.5,237.0M92.8,273.1L223.5,222.4M92.8,258.4L223.5,207.7M92.8,243.8L223.5,193.1M92.8,229.1L223.5,178.4M92.8,302.4v-73.3M125.5,289.7v-73.3M158.1,277.0v-73.3M190.8,264.4v-73.3M223.5,251.7v-73.3" fill="none" stroke="#123a5c" stroke-width="1.35"/><path d="M103.7,298.2v-73.3M114.6,293.9v-73.3M136.4,285.5v-73.3M147.3,281.3v-73.3M169.0,272.8v-73.3M179.9,268.6v-73.3M201.7,260.1v-73.3M212.6,255.9v-73.3" fill="none" stroke="#123a5c" stroke-width="1.2" stroke-dasharray="1.3 2.3"/><path d="M92.8 298.7l3.6 -1.4M223.5 248.0l-3.6 1.4M92.8 295.1l3.6 -1.4M223.5 244.4l-3.6 1.4M92.8 291.4l3.6 -1.4M223.5 240.7l-3.6 1.4M92.8 287.7l3.6 -1.4M223.5 237.0l-3.6 1.4M92.8 284.1l3.6 -1.4M223.5 233.4l-3.6 1.4M92.8 280.4l3.6 -1.4M223.5 229.7l-3.6 1.4M92.8 276.7l3.6 -1.4M223.5 226.0l-3.6 1.4M92.8 273.1l3.6 -1.4M223.5 222.4l-3.6 1.4M92.8 269.4l3.6 -1.4M223.5 218.7l-3.6 1.4M92.8 265.8l3.6 -1.4M223.5 215.0l-3.6 1.4M92.8 262.1l3.6 -1.4M223.5 211.4l-3.6 1.4M92.8 258.4l3.6 -1.4M223.5 207.7l-3.6 1.4M92.8 254.8l3.6 -1.4M223.5 204.1l-3.6 1.4M92.8 251.1l3.6 -1.4M223.5 200.4l-3.6 1.4M92.8 247.4l3.6 -1.4M223.5 196.7l-3.6 1.4M92.8 243.8l3.6 -1.4M223.5 193.1l-3.6 1.4M92.8 240.1l3.6 -1.4M223.5 189.4l-3.6 1.4M92.8 236.4l3.6 -1.4M223.5 185.7l-3.6 1.4M92.8 232.8l3.6 -1.4M223.5 182.1l-3.6 1.4" fill="none" stroke="#123a5c" stroke-width="1"/><defs><pattern id="fd" width="48" height="48" patternUnits="userSpaceOnUse"><rect x="0.3" y="1.3" width="0.9" height="0.9" fill="#84cee2" opacity="0.7"/><rect x="1.2" y="4.8" width="0.9" height="0.9" fill="#84cee2" opacity="0.4"/><rect x="0.8" y="6.5" width="1.2" height="1.2" fill="#84cee2" opacity="0.55"/><rect x="1.1" y="10.9" width="1.2" height="1.2" fill="#84cee2" opacity="0.7"/><rect x="0.1" y="13.2" width="0.9" height="0.9" fill="#84cee2" opacity="0.4"/><rect x="1.7" y="15.6" width="0.9" height="0.9" fill="#84cee2" opacity="0.7"/><rect x="0.6" y="19.6" width="0.9" height="0.9" fill="#84cee2" opacity="0.4"/><rect x="1.3" y="21.7" width="1.2" height="1.2" fill="#84cee2" opacity="0.7"/><rect x="0.1" y="24.4" width="1.2" height="1.2" fill="#84cee2" opacity="0.7"/><rect x="0.6" y="28.2" width="1.1" height="1.1" fill="#84cee2" opacity="0.55"/><rect x="1.6" y="31.4" width="0.9" height="0.9" fill="#84cee2" opacity="0.4"/><rect x="1.1" y="34.8" width="1.2" height="1.2" fill="#84cee2" opacity="0.55"/><rect x="2.0" y="36.2" width="1.1" height="1.1" fill="#84cee2" opacity="0.4"/><rect x="0.3" y="40.0" width="0.9" height="0.9" fill="#84cee2" opacity="0.7"/><rect x="1.1" y="43.6" width="1.1" height="1.1" fill="#84cee2" opacity="0.55"/><rect x="1.2" y="46.2" width="1.1" height="1.1" fill="#84cee2" opacity="0.4"/><rect x="4.3" y="6.1" width="1.2" height="1.2" fill="#84cee2" opacity="0.55"/><rect x="5.0" y="10.6" width="1.1" height="1.1" fill="#84cee2" opacity="0.7"/><rect x="4.3" y="12.0" width="1.1" height="1.1" fill="#84cee2" opacity="0.55"/><rect x="3.2" y="15.1" width="1.1" height="1.1" fill="#84cee2" opacity="0.4"/><rect x="3.8" y="19.8" width="1.1" height="1.1" fill="#84cee2" opacity="0.4"/><rect x="3.8" y="21.6" width="0.9" height="0.9" fill="#84cee2" opacity="0.55"/><rect x="3.8" y="27.7" width="1.1" height="1.1" fill="#84cee2" opacity="0.4"/><rect x="3.4" y="30.5" width="0.9" height="0.9" fill="#84cee2" opacity="0.4"/><rect x="4.2" y="33.5" width="0.9" height="0.9" fill="#84cee2" opacity="0.4"/><rect x="3.7" y="37.1" width="0.9" height="0.9" fill="#84cee2" opacity="0.7"/><rect x="4.5" y="45.9" width="1.2" height="1.2" fill="#84cee2" opacity="0.7"/><rect x="6.8" y="0.2" width="1.2" height="1.2" fill="#84cee2" opacity="0.55"/><rect x="6.1" y="3.4" width="0.9" height="0.9" fill="#84cee2" opacity="0.4"/><rect x="6.1" y="6.0" width="0.9" height="0.9" fill="#84cee2" opacity="0.7"/><rect x="6.7" y="9.1" width="0.9" height="0.9" fill="#84cee2" opacity="0.7"/><rect x="7.3" y="13.9" width="1.2" height="1.2" fill="#84cee2" opacity="0.55"/><rect x="6.2" y="16.0" width="1.1" height="1.1" fill="#84cee2" opacity="0.55"/><rect x="6.2" y="18.2" width="1.1" height="1.1" fill="#84cee2" opacity="0.7"/><rect x="7.7" y="21.3" width="0.9" height="0.9" fill="#84cee2" opacity="0.4"/><rect x="6.3" y="28.1" width="0.9" height="0.9" fill="#84cee2" opacity="0.7"/><rect x="7.3" y="30.2" width="1.1" height="1.1" fill="#84cee2" opacity="0.7"/><rect x="6.3" y="34.5" width="1.2" height="1.2" fill="#84cee2" opacity="0.7"/><rect x="6.7" y="36.4" width="0.9" height="0.9" fill="#84cee2" opacity="0.4"/><rect x="6.5" y="43.0" width="1.1" height="1.1" fill="#84cee2" opacity="0.7"/><rect x="6.1" y="45.6" width="1.1" height="1.1" fill="#84cee2" opacity="0.4"/><rect x="10.9" y="0.9" width="1.2" height="1.2" fill="#84cee2" opacity="0.55"/><rect x="9.4" y="6.5" width="0.9" height="0.9" fill="#84cee2" opacity="0.55"/><rect x="10.2" y="10.8" width="0.9" height="0.9" fill="#84cee2" opacity="0.55"/><rect x="10.3" y="16.7" width="0.9" height="0.9" fill="#84cee2" opacity="0.55"/><rect x="10.0" y="21.4" width="1.2" height="1.2" fill="#84cee2" opacity="0.55"/><rect x="10.9" y="25.4" width="1.1" height="1.1" fill="#84cee2" opacity="0.55"/><rect x="9.2" y="27.3" width="0.9" height="0.9" fill="#84cee2" opacity="0.4"/><rect x="10.8" y="31.6" width="0.9" height="0.9" fill="#84cee2" opacity="0.7"/><rect x="9.7" y="40.1" width="0.9" height="0.9" fill="#84cee2" opacity="0.4"/><rect x="10.9" y="43.3" width="1.2" height="1.2" fill="#84cee2" opacity="0.7"/><rect x="13.7" y="1.7" width="0.9" height="0.9" fill="#84cee2" opacity="0.4"/><rect x="12.6" y="3.5" width="1.2" height="1.2" fill="#84cee2" opacity="0.55"/><rect x="12.8" y="6.3" width="1.2" height="1.2" fill="#84cee2" opacity="0.55"/><rect x="13.6" y="13.0" width="1.2" height="1.2" fill="#84cee2" opacity="0.4"/><rect x="13.0" y="15.0" width="1.1" height="1.1" fill="#84cee2" opacity="0.4"/><rect x="13.6" y="18.3" width="0.9" height="0.9" fill="#84cee2" opacity="0.55"/><rect x="12.2" y="21.1" width="1.2" height="1.2" fill="#84cee2" opacity="0.7"/><rect x="13.0" y="25.6" width="1.2" height="1.2" fill="#84cee2" opacity="0.4"/><rect x="12.6" y="28.5" width="1.2" height="1.2" fill="#84cee2" opacity="0.55"/><rect x="13.5" y="31.8" width="1.1" height="1.1" fill="#84cee2" opacity="0.55"/><rect x="13.0" y="34.0" width="1.2" height="1.2" fill="#84cee2" opacity="0.55"/><rect x="13.1" y="37.0" width="0.9" height="0.9" fill="#84cee2" opacity="0.7"/><rect x="13.8" y="40.9" width="1.2" height="1.2" fill="#84cee2" opacity="0.4"/><rect x="12.2" y="45.9" width="0.9" height="0.9" fill="#84cee2" opacity="0.7"/><rect x="15.1" y="1.3" width="0.9" height="0.9" fill="#84cee2" opacity="0.4"/><rect x="15.7" y="6.5" width="0.9" height="0.9" fill="#84cee2" opacity="0.55"/><rect x="16.9" y="9.8" width="1.1" height="1.1" fill="#84cee2" opacity="0.4"/><rect x="15.9" y="19.0" width="1.1" height="1.1" fill="#84cee2" opacity="0.55"/><rect x="15.6" y="22.4" width="0.9" height="0.9" fill="#84cee2" opacity="0.55"/><rect x="15.9" y="24.0" width="1.1" height="1.1" fill="#84cee2" opacity="0.7"/><rect x="16.0" y="27.1" width="0.9" height="0.9" fill="#84cee2" opacity="0.4"/><rect x="15.5" y="31.8" width="0.9" height="0.9" fill="#84cee2" opacity="0.55"/><rect x="16.6" y="34.7" width="1.2" height="1.2" fill="#84cee2" opacity="0.55"/><rect x="16.1" y="37.0" width="1.1" height="1.1" fill="#84cee2" opacity="0.7"/><rect x="15.6" y="40.6" width="0.9" height="0.9" fill="#84cee2" opacity="0.55"/><rect x="15.0" y="45.2" width="1.1" height="1.1" fill="#84cee2" opacity="0.4"/><rect x="18.4" y="0.5" width="0.9" height="0.9" fill="#84cee2" opacity="0.55"/><rect x="20.0" y="3.8" width="1.1" height="1.1" fill="#84cee2" opacity="0.7"/><rect x="19.1" y="6.5" width="0.9" height="0.9" fill="#84cee2" opacity="0.4"/><rect x="18.4" y="10.9" width="1.2" height="1.2" fill="#84cee2" opacity="0.55"/><rect x="18.4" y="12.9" width="1.2" height="1.2" fill="#84cee2" opacity="0.4"/><rect x="19.6" y="17.0" width="0.9" height="0.9" fill="#84cee2" opacity="0.4"/><rect x="19.0" y="20.0" width="1.2" height="1.2" fill="#84cee2" opacity="0.55"/><rect x="18.9" y="22.3" width="1.2" height="1.2" fill="#84cee2" opacity="0.55"/><rect x="19.1" y="25.8" width="1.2" height="1.2" fill="#84cee2" opacity="0.55"/><rect x="20.0" y="27.7" width="1.2" height="1.2" fill="#84cee2" opacity="0.7"/><rect x="18.8" y="30.7" width="0.9" height="0.9" fill="#84cee2" opacity="0.4"/><rect x="19.3" y="34.8" width="1.1" height="1.1" fill="#84cee2" opacity="0.4"/><rect x="19.3" y="36.8" width="1.2" height="1.2" fill="#84cee2" opacity="0.7"/><rect x="19.4" y="42.1" width="0.9" height="0.9" fill="#84cee2" opacity="0.4"/><rect x="18.0" y="45.7" width="1.1" height="1.1" fill="#84cee2" opacity="0.7"/><rect x="21.1" y="1.8" width="0.9" height="0.9" fill="#84cee2" opacity="0.55"/><rect x="21.7" y="3.2" width="1.1" height="1.1" fill="#84cee2" opacity="0.7"/><rect x="21.5" y="7.6" width="0.9" height="0.9" fill="#84cee2" opacity="0.55"/><rect x="22.2" y="12.8" width="1.1" height="1.1" fill="#84cee2" opacity="0.55"/><rect x="21.2" y="16.9" width="0.9" height="0.9" fill="#84cee2" opacity="0.7"/><rect x="22.5" y="25.4" width="1.1" height="1.1" fill="#84cee2" opacity="0.4"/><rect x="22.2" y="27.3" width="1.2" height="1.2" fill="#84cee2" opacity="0.7"/><rect x="22.5" y="31.6" width="0.9" height="0.9" fill="#84cee2" opacity="0.7"/><rect x="22.1" y="34.6" width="0.9" height="0.9" fill="#84cee2" opacity="0.7"/><rect x="22.8" y="37.4" width="1.2" height="1.2" fill="#84cee2" opacity="0.7"/><rect x="21.1" y="39.3" width="1.1" height="1.1" fill="#84cee2" opacity="0.4"/><rect x="21.9" y="42.1" width="0.9" height="0.9" fill="#84cee2" opacity="0.7"/><rect x="21.5" y="45.5" width="1.1" height="1.1" fill="#84cee2" opacity="0.4"/><rect x="25.0" y="1.1" width="1.2" height="1.2" fill="#84cee2" opacity="0.7"/><rect x="25.5" y="3.5" width="0.9" height="0.9" fill="#84cee2" opacity="0.55"/><rect x="25.5" y="6.5" width="1.2" height="1.2" fill="#84cee2" opacity="0.55"/><rect x="24.8" y="10.0" width="1.2" height="1.2" fill="#84cee2" opacity="0.55"/><rect x="25.2" y="13.3" width="0.9" height="0.9" fill="#84cee2" opacity="0.7"/><rect x="24.5" y="16.5" width="1.1" height="1.1" fill="#84cee2" opacity="0.7"/><rect x="24.0" y="18.1" width="1.1" height="1.1" fill="#84cee2" opacity="0.7"/><rect x="24.4" y="22.0" width="1.2" height="1.2" fill="#84cee2" opacity="0.7"/><rect x="24.9" y="25.5" width="1.2" height="1.2" fill="#84cee2" opacity="0.4"/><rect x="24.2" y="27.9" width="1.1" height="1.1" fill="#84cee2" opacity="0.55"/><rect x="25.0" y="32.0" width="1.1" height="1.1" fill="#84cee2" opacity="0.55"/><rect x="25.9" y="33.4" width="1.2" height="1.2" fill="#84cee2" opacity="0.4"/><rect x="25.0" y="37.9" width="0.9" height="0.9" fill="#84cee2" opacity="0.7"/><rect x="25.8" y="43.4" width="0.9" height="0.9" fill="#84cee2" opacity="0.55"/><rect x="27.0" y="0.0" width="1.1" height="1.1" fill="#84cee2" opacity="0.7"/><rect x="27.6" y="3.3" width="1.1" height="1.1" fill="#84cee2" opacity="0.55"/><rect x="28.7" y="6.0" width="1.1" height="1.1" fill="#84cee2" opacity="0.55"/><rect x="28.9" y="10.4" width="1.2" height="1.2" fill="#84cee2" opacity="0.55"/><rect x="27.1" y="12.8" width="1.2" height="1.2" fill="#84cee2" opacity="0.4"/><rect x="27.9" y="15.6" width="0.9" height="0.9" fill="#84cee2" opacity="0.55"/><rect x="28.7" y="18.6" width="0.9" height="0.9" fill="#84cee2" opacity="0.4"/><rect x="27.6" y="25.5" width="1.1" height="1.1" fill="#84cee2" opacity="0.4"/><rect x="28.8" y="31.9" width="1.2" height="1.2" fill="#84cee2" opacity="0.4"/><rect x="27.1" y="34.5" width="1.1" height="1.1" fill="#84cee2" opacity="0.7"/><rect x="28.3" y="36.6" width="0.9" height="0.9" fill="#84cee2" opacity="0.7"/><rect x="27.9" y="39.7" width="1.1" height="1.1" fill="#84cee2" opacity="0.55"/><rect x="29.0" y="42.5" width="1.2" height="1.2" fill="#84cee2" opacity="0.4"/><rect x="28.1" y="45.8" width="0.9" height="0.9" fill="#84cee2" opacity="0.7"/><rect x="30.4" y="1.8" width="1.1" height="1.1" fill="#84cee2" opacity="0.7"/><rect x="31.8" y="5.0" width="1.1" height="1.1" fill="#84cee2" opacity="0.55"/><rect x="30.4" y="6.2" width="1.1" height="1.1" fill="#84cee2" opacity="0.7"/><rect x="30.5" y="9.5" width="1.2" height="1.2" fill="#84cee2" opacity="0.4"/><rect x="30.8" y="15.8" width="1.2" height="1.2" fill="#84cee2" opacity="0.4"/><rect x="30.7" y="18.1" width="1.1" height="1.1" fill="#84cee2" opacity="0.7"/><rect x="31.0" y="25.3" width="0.9" height="0.9" fill="#84cee2" opacity="0.4"/><rect x="30.5" y="27.8" width="1.1" height="1.1" fill="#84cee2" opacity="0.55"/><rect x="30.1" y="40.4" width="1.1" height="1.1" fill="#84cee2" opacity="0.7"/><rect x="30.1" y="43.9" width="1.2" height="1.2" fill="#84cee2" opacity="0.55"/><rect x="33.2" y="0.3" width="1.2" height="1.2" fill="#84cee2" opacity="0.7"/><rect x="34.7" y="4.4" width="1.1" height="1.1" fill="#84cee2" opacity="0.4"/><rect x="33.1" y="7.6" width="0.9" height="0.9" fill="#84cee2" opacity="0.7"/><rect x="33.6" y="12.3" width="1.1" height="1.1" fill="#84cee2" opacity="0.7"/><rect x="34.4" y="15.2" width="0.9" height="0.9" fill="#84cee2" opacity="0.55"/><rect x="34.2" y="18.8" width="0.9" height="0.9" fill="#84cee2" opacity="0.7"/><rect x="34.1" y="23.0" width="1.1" height="1.1" fill="#84cee2" opacity="0.55"/><rect x="34.8" y="25.0" width="0.9" height="0.9" fill="#84cee2" opacity="0.7"/><rect x="34.9" y="28.4" width="1.1" height="1.1" fill="#84cee2" opacity="0.4"/><rect x="34.0" y="31.3" width="1.1" height="1.1" fill="#84cee2" opacity="0.4"/><rect x="34.3" y="34.9" width="0.9" height="0.9" fill="#84cee2" opacity="0.55"/><rect x="33.7" y="36.8" width="1.2" height="1.2" fill="#84cee2" opacity="0.55"/><rect x="34.6" y="40.5" width="1.2" height="1.2" fill="#84cee2" opacity="0.4"/><rect x="34.9" y="42.6" width="0.9" height="0.9" fill="#84cee2" opacity="0.4"/><rect x="33.5" y="46.8" width="0.9" height="0.9" fill="#84cee2" opacity="0.7"/><rect x="36.4" y="0.4" width="1.1" height="1.1" fill="#84cee2" opacity="0.7"/><rect x="37.2" y="4.8" width="0.9" height="0.9" fill="#84cee2" opacity="0.4"/><rect x="37.2" y="6.8" width="1.2" height="1.2" fill="#84cee2" opacity="0.4"/><rect x="36.9" y="10.4" width="1.1" height="1.1" fill="#84cee2" opacity="0.7"/><rect x="36.2" y="12.3" width="0.9" height="0.9" fill="#84cee2" opacity="0.4"/><rect x="37.0" y="15.9" width="1.1" height="1.1" fill="#84cee2" opacity="0.7"/><rect x="37.7" y="20.0" width="1.1" height="1.1" fill="#84cee2" opacity="0.4"/><rect x="36.2" y="21.2" width="1.1" height="1.1" fill="#84cee2" opacity="0.4"/><rect x="37.5" y="24.8" width="1.1" height="1.1" fill="#84cee2" opacity="0.55"/><rect x="37.4" y="27.4" width="1.2" height="1.2" fill="#84cee2" opacity="0.55"/><rect x="36.7" y="31.8" width="0.9" height="0.9" fill="#84cee2" opacity="0.7"/><rect x="37.6" y="34.5" width="0.9" height="0.9" fill="#84cee2" opacity="0.55"/><rect x="36.1" y="37.8" width="1.1" height="1.1" fill="#84cee2" opacity="0.4"/><rect x="37.8" y="39.7" width="1.1" height="1.1" fill="#84cee2" opacity="0.55"/><rect x="36.5" y="46.4" width="1.1" height="1.1" fill="#84cee2" opacity="0.55"/><rect x="40.4" y="1.2" width="1.2" height="1.2" fill="#84cee2" opacity="0.4"/><rect x="39.5" y="4.0" width="1.1" height="1.1" fill="#84cee2" opacity="0.55"/><rect x="40.0" y="15.0" width="1.2" height="1.2" fill="#84cee2" opacity="0.55"/><rect x="40.2" y="21.7" width="1.1" height="1.1" fill="#84cee2" opacity="0.55"/><rect x="40.6" y="24.2" width="0.9" height="0.9" fill="#84cee2" opacity="0.55"/><rect x="39.5" y="27.1" width="0.9" height="0.9" fill="#84cee2" opacity="0.55"/><rect x="39.7" y="32.0" width="0.9" height="0.9" fill="#84cee2" opacity="0.4"/><rect x="39.2" y="33.2" width="1.1" height="1.1" fill="#84cee2" opacity="0.7"/><rect x="39.3" y="39.9" width="1.2" height="1.2" fill="#84cee2" opacity="0.4"/><rect x="40.7" y="43.3" width="0.9" height="0.9" fill="#84cee2" opacity="0.55"/><rect x="40.1" y="45.7" width="1.2" height="1.2" fill="#84cee2" opacity="0.55"/><rect x="42.5" y="0.5" width="0.9" height="0.9" fill="#84cee2" opacity="0.55"/><rect x="42.7" y="6.8" width="0.9" height="0.9" fill="#84cee2" opacity="0.7"/><rect x="43.3" y="9.2" width="1.1" height="1.1" fill="#84cee2" opacity="0.4"/><rect x="42.9" y="13.6" width="1.1" height="1.1" fill="#84cee2" opacity="0.55"/><rect x="42.6" y="15.2" width="0.9" height="0.9" fill="#84cee2" opacity="0.7"/><rect x="43.9" y="21.7" width="0.9" height="0.9" fill="#84cee2" opacity="0.55"/><rect x="43.5" y="25.3" width="0.9" height="0.9" fill="#84cee2" opacity="0.4"/><rect x="43.4" y="27.7" width="0.9" height="0.9" fill="#84cee2" opacity="0.55"/><rect x="42.1" y="32.0" width="0.9" height="0.9" fill="#84cee2" opacity="0.7"/><rect x="43.8" y="34.6" width="1.1" height="1.1" fill="#84cee2" opacity="0.55"/><rect x="42.4" y="36.6" width="0.9" height="0.9" fill="#84cee2" opacity="0.4"/><rect x="42.1" y="42.2" width="1.1" height="1.1" fill="#84cee2" opacity="0.7"/><rect x="43.3" y="45.2" width="0.9" height="0.9" fill="#84cee2" opacity="0.55"/><rect x="45.8" y="0.6" width="1.1" height="1.1" fill="#84cee2" opacity="0.55"/><rect x="46.1" y="6.7" width="1.1" height="1.1" fill="#84cee2" opacity="0.4"/><rect x="45.4" y="16.5" width="0.9" height="0.9" fill="#84cee2" opacity="0.4"/><rect x="45.3" y="18.2" width="0.9" height="0.9" fill="#84cee2" opacity="0.55"/><rect x="45.7" y="22.5" width="0.9" height="0.9" fill="#84cee2" opacity="0.4"/><rect x="45.3" y="25.6" width="1.1" height="1.1" fill="#84cee2" opacity="0.4"/><rect x="46.9" y="28.5" width="0.9" height="0.9" fill="#84cee2" opacity="0.4"/><rect x="45.3" y="30.3" width="0.9" height="0.9" fill="#84cee2" opacity="0.4"/><rect x="46.5" y="34.6" width="0.9" height="0.9" fill="#84cee2" opacity="0.55"/><rect x="46.9" y="38.0" width="1.1" height="1.1" fill="#84cee2" opacity="0.55"/><rect x="46.9" y="39.8" width="1.2" height="1.2" fill="#84cee2" opacity="0.7"/><rect x="46.8" y="43.3" width="0.9" height="0.9" fill="#84cee2" opacity="0.7"/><rect x="46.7" y="46.7" width="0.9" height="0.9" fill="#84cee2" opacity="0.7"/><rect x="10.5" y="19.2" width="1.1" height="1.1" fill="#1e5058" opacity="0.6"/><rect x="24.9" y="18.4" width="1.1" height="1.1" fill="#1e5058" opacity="0.6"/><rect x="5.9" y="11.9" width="1.1" height="1.1" fill="#1e5058" opacity="0.6"/><rect x="34.8" y="43.1" width="1.1" height="1.1" fill="#1e5058" opacity="0.6"/><rect x="2.0" y="27.0" width="1.1" height="1.1" fill="#1e5058" opacity="0.6"/><rect x="36.4" y="1.8" width="1.1" height="1.1" fill="#1e5058" opacity="0.6"/><rect x="40.2" y="5.7" width="1.1" height="1.1" fill="#1e5058" opacity="0.6"/><rect x="28.8" y="26.4" width="1.1" height="1.1" fill="#1e5058" opacity="0.6"/><rect x="30.1" y="14.7" width="1.1" height="1.1" fill="#1e5058" opacity="0.6"/><rect x="20.2" y="28.0" width="1.1" height="1.1" fill="#1e5058" opacity="0.6"/><rect x="20.4" y="31.6" width="1.1" height="1.1" fill="#1e5058" opacity="0.6"/><rect x="21.4" y="21.0" width="1.1" height="1.1" fill="#1e5058" opacity="0.6"/><rect x="1.1" y="29.7" width="1.1" height="1.1" fill="#1e5058" opacity="0.6"/><rect x="23.5" y="11.3" width="1.1" height="1.1" fill="#1e5058" opacity="0.6"/><rect x="36.7" y="37.4" width="1.1" height="1.1" fill="#1e5058" opacity="0.6"/><rect x="22.0" y="8.6" width="1.1" height="1.1" fill="#1e5058" opacity="0.6"/><rect x="22.7" y="5.1" width="1.1" height="1.1" fill="#1e5058" opacity="0.6"/><rect x="6.2" y="20.7" width="1.1" height="1.1" fill="#1e5058" opacity="0.6"/><rect x="4.4" y="21.2" width="1.1" height="1.1" fill="#1e5058" opacity="0.6"/><rect x="24.5" y="2.0" width="1.1" height="1.1" fill="#1e5058" opacity="0.6"/><rect x="30.5" y="3.9" width="1.1" height="1.1" fill="#1e5058" opacity="0.6"/><rect x="35.2" y="37.3" width="1.1" height="1.1" fill="#1e5058" opacity="0.6"/><rect x="24.6" y="2.6" width="1.1" height="1.1" fill="#1e5058" opacity="0.6"/><rect x="24.2" y="18.1" width="1.1" height="1.1" fill="#1e5058" opacity="0.6"/><rect x="45.6" y="6.5" width="1.1" height="1.1" fill="#1e5058" opacity="0.6"/><rect x="41.1" y="47.8" width="1.1" height="1.1" fill="#1e5058" opacity="0.6"/><rect x="35.1" y="39.1" width="1.1" height="1.1" fill="#1e5058" opacity="0.6"/><rect x="9.3" y="47.1" width="1.1" height="1.1" fill="#1e5058" opacity="0.6"/><rect x="23.6" y="45.9" width="1.1" height="1.1" fill="#1e5058" opacity="0.6"/><rect x="44.0" y="7.9" width="1.1" height="1.1" fill="#1e5058" opacity="0.6"/><rect x="37.8" y="44.7" width="1.1" height="1.1" fill="#1e5058" opacity="0.6"/><rect x="3.1" y="16.8" width="1.1" height="1.1" fill="#1e5058" opacity="0.6"/><rect x="36.3" y="7.6" width="1.1" height="1.1" fill="#1e5058" opacity="0.6"/><rect x="43.0" y="13.2" width="1.1" height="1.1" fill="#1e5058" opacity="0.6"/><rect x="39.2" y="6.9" width="1.1" height="1.1" fill="#1e5058" opacity="0.6"/><rect x="24.1" y="44.2" width="1.1" height="1.1" fill="#1e5058" opacity="0.6"/></pattern><linearGradient id="pk" x1="0" x2="0" y1="0" y2="1"><stop offset="0" stop-color="#b40c0c"/><stop offset="0.6" stop-color="#c80a0a"/><stop offset="1" stop-color="#c80c0c"/></linearGradient></defs><polygon points="92.8,302.4 210.4,256.8 341.1,309.0 223.5,354.6" fill="#428a8c"/><polygon points="92.8,302.4 210.4,256.8 341.1,309.0 223.5,354.6" fill="url(#fd)"/><path d="M230.9,266.0L245.3,260.4M252.7,274.7L267.1,269.1M274.5,283.4L288.8,277.8M296.3,292.1L310.6,286.5M318.0,300.8L332.4,295.2M339.8,309.5L354.2,303.9" fill="none" stroke="#123a5c" stroke-width="1"/><path d="M217.7,259.7L230.8,254.6M225.0,262.6L238.0,257.5M239.5,268.4L252.5,263.3M246.7,271.3L259.8,266.2M261.3,277.1L274.3,272.0M268.5,280.0L281.6,274.9M283.0,285.8L296.1,280.7M290.3,288.7L303.4,283.6M304.8,294.5L317.9,289.4M312.1,297.4L325.2,292.3M326.6,303.2L339.7,298.1M333.9,306.1L346.9,301.0M217.0,254.2L347.7,306.4" fill="none" stroke="#123a5c" stroke-width="1.2" stroke-dasharray="1.3 2.3"/><polygon points="92.8,302.4 223.5,251.7 353.0,302.8 223.5,354.6" fill="none" stroke="#123a5c" stroke-width="1.35"/><defs><linearGradient id="psh" x1="0" x2="1" y1="0" y2="0"><stop offset="0" stop-color="#ff2020" stop-opacity="0.18"/><stop offset="0.45" stop-color="#800000" stop-opacity="0"/><stop offset="1" stop-color="#500000" stop-opacity="0.32"/></linearGradient></defs><defs><filter id="vb" x="-10%" y="-10%" width="120%" height="130%"><feGaussianBlur stdDeviation="0.5 2.4"/></filter></defs><clipPath id="pc0"><polygon points="160.2,284.0 162.5,268.0 164.9,252.8 166.8,262.0 168.9,269.4 170.5,260.0 172.3,253.6 175.5,251.5 178.6,250.5 180.0,256.0 181.3,260.7 182.8,255.0 184.2,249.7 185.8,258.0 187.3,264.7 189.0,258.0 190.8,252.0 193.5,266.0 196.8,281.0 196.8,291.8 195.1,291.4 193.5,294.5 191.8,294.8 190.1,294.1 188.5,295.2 186.8,294.4 185.2,295.2 183.5,297.8 181.8,297.3 180.2,298.5 178.5,297.3 176.8,302.4 175.2,299.9 173.5,300.0 171.8,301.9 170.2,299.2 168.5,299.4 166.9,296.1 165.2,295.4 163.5,294.2 161.9,294.2 160.2,292.7"/></clipPath><g clip-path="url(#pc0)"><polygon points="160.2,284.0 162.5,268.0 164.9,252.8 166.8,262.0 168.9,269.4 170.5,260.0 172.3,253.6 175.5,251.5 178.6,250.5 180.0,256.0 181.3,260.7 182.8,255.0 184.2,249.7 185.8,258.0 187.3,264.7 189.0,258.0 190.8,252.0 193.5,266.0 196.8,281.0 196.8,282.8 195.1,282.4 193.5,285.5 191.8,285.8 190.1,285.1 188.5,286.2 186.8,285.4 185.2,286.2 183.5,288.8 181.8,288.3 180.2,289.5 178.5,288.3 176.8,293.4 175.2,290.9 173.5,291.0 171.8,292.9 170.2,290.2 168.5,290.4 166.9,287.1 165.2,286.4 163.5,285.2 161.9,285.2 160.2,283.7" fill="#c41010" filter="url(#vb)"/></g><polygon points="160.2,284.0 162.5,268.0 164.9,252.8 166.8,262.0 168.9,269.4 170.5,260.0 172.3,253.6 175.5,251.5 178.6,250.5 180.0,256.0 181.3,260.7 182.8,255.0 184.2,249.7 185.8,258.0 187.3,264.7 189.0,258.0 190.8,252.0 193.5,266.0 196.8,281.0 196.8,281.2 195.1,277.9 193.5,281.0 191.8,281.3 190.1,280.6 188.5,281.7 186.8,280.9 185.2,281.7 183.5,284.3 181.8,283.8 180.2,285.0 178.5,283.8 176.8,288.9 175.2,286.4 173.5,286.5 171.8,288.4 170.2,285.7 168.5,285.9 166.9,282.6 165.2,281.9 163.5,280.7 161.9,280.7 160.2,284.2" fill="url(#pk)"/><polygon points="160.2,284.0 162.5,268.0 164.9,252.8 166.8,262.0 168.9,269.4 170.5,260.0 172.3,253.6 175.5,251.5 178.6,250.5 180.0,256.0 181.3,260.7 182.8,255.0 184.2,249.7 185.8,258.0 187.3,264.7 189.0,258.0 190.8,252.0 193.5,266.0 196.8,281.0 196.8,281.2 195.1,277.9 193.5,281.0 191.8,281.3 190.1,280.6 188.5,281.7 186.8,280.9 185.2,281.7 183.5,284.3 181.8,283.8 180.2,285.0 178.5,283.8 176.8,288.9 175.2,286.4 173.5,286.5 171.8,288.4 170.2,285.7 168.5,285.9 166.9,282.6 165.2,281.9 163.5,280.7 161.9,280.7 160.2,284.2" fill="url(#psh)"/><clipPath id="pc1"><polygon points="230.2,314.0 233.5,296.0 237.3,273.4 241.7,245.6 243.6,256.0 245.7,264.7 247.2,256.0 249.1,249.1 253.0,246.5 256.4,245.6 257.8,256.0 260.8,280.3 264.2,278.6 267.0,287.0 269.4,295.9 272.0,306.3 272.0,321.8 270.4,322.4 268.8,324.1 267.2,323.6 265.6,323.9 264.0,324.4 262.4,323.8 260.7,325.0 259.1,324.5 257.5,326.3 255.9,324.0 254.3,323.9 252.7,323.9 251.1,326.5 249.5,326.8 247.9,325.4 246.3,326.6 244.7,325.6 243.1,327.7 241.5,327.3 239.8,328.2 238.2,328.0 236.6,327.1 235.0,327.5 233.4,324.1 231.8,324.2 230.2,324.3"/></clipPath><g clip-path="url(#pc1)"><polygon points="230.2,314.0 233.5,296.0 237.3,273.4 241.7,245.6 243.6,256.0 245.7,264.7 247.2,256.0 249.1,249.1 253.0,246.5 256.4,245.6 257.8,256.0 260.8,280.3 264.2,278.6 267.0,287.0 269.4,295.9 272.0,306.3 272.0,312.8 270.4,313.4 268.8,315.1 267.2,314.6 265.6,314.9 264.0,315.4 262.4,314.8 260.7,316.0 259.1,315.5 257.5,317.3 255.9,315.0 254.3,314.9 252.7,314.9 251.1,317.5 249.5,317.8 247.9,316.4 246.3,317.6 244.7,316.6 243.1,318.7 241.5,318.3 239.8,319.2 238.2,319.0 236.6,318.1 235.0,318.5 233.4,315.1 231.8,315.2 230.2,315.3" fill="#c41010" filter="url(#vb)"/></g><polygon points="230.2,314.0 233.5,296.0 237.3,273.4 241.7,245.6 243.6,256.0 245.7,264.7 247.2,256.0 249.1,249.1 253.0,246.5 256.4,245.6 257.8,256.0 260.8,280.3 264.2,278.6 267.0,287.0 269.4,295.9 272.0,306.3 272.0,308.3 270.4,308.9 268.8,310.6 267.2,310.1 265.6,310.4 264.0,310.9 262.4,310.3 260.7,311.5 259.1,311.0 257.5,312.8 255.9,310.5 254.3,310.4 252.7,310.4 251.1,313.0 249.5,313.3 247.9,311.9 246.3,313.1 244.7,312.1 243.1,314.2 241.5,313.8 239.8,314.7 238.2,314.5 236.6,313.6 235.0,314.0 233.4,310.6 231.8,310.7 230.2,314.2" fill="url(#pk)"/><polygon points="230.2,314.0 233.5,296.0 237.3,273.4 241.7,245.6 243.6,256.0 245.7,264.7 247.2,256.0 249.1,249.1 253.0,246.5 256.4,245.6 257.8,256.0 260.8,280.3 264.2,278.6 267.0,287.0 269.4,295.9 272.0,306.3 272.0,308.3 270.4,308.9 268.8,310.6 267.2,310.1 265.6,310.4 264.0,310.9 262.4,310.3 260.7,311.5 259.1,311.0 257.5,312.8 255.9,310.5 254.3,310.4 252.7,310.4 251.1,313.0 249.5,313.3 247.9,311.9 246.3,313.1 244.7,312.1 243.1,314.2 241.5,313.8 239.8,314.7 238.2,314.5 236.6,313.6 235.0,314.0 233.4,310.6 231.8,310.7 230.2,314.2" fill="url(#psh)"/><clipPath id="pc2"><polygon points="271.5,316.0 273.8,299.4 276.4,287.3 278.0,292.0 281.6,273.4 284.0,281.0 285.9,287.3 289.7,271.6 291.3,279.0 292.9,285.5 296.3,269.9 297.6,275.0 298.9,280.3 301.9,267.3 304.5,282.0 306.7,294.2 306.7,303.9 305.0,305.3 303.3,307.2 301.7,305.5 300.0,309.0 298.3,309.2 296.6,307.2 295.0,308.6 293.3,310.1 291.6,311.4 289.9,309.9 288.3,311.9 286.6,311.9 284.9,313.4 283.2,314.0 281.6,314.1 279.9,324.8 278.2,326.7 276.5,328.1 274.9,328.0 273.2,328.5 271.5,328.1"/></clipPath><g clip-path="url(#pc2)"><polygon points="271.5,316.0 273.8,299.4 276.4,287.3 278.0,292.0 281.6,273.4 284.0,281.0 285.9,287.3 289.7,271.6 291.3,279.0 292.9,285.5 296.3,269.9 297.6,275.0 298.9,280.3 301.9,267.3 304.5,282.0 306.7,294.2 306.7,294.9 305.0,296.3 303.3,298.2 301.7,296.5 300.0,300.0 298.3,300.2 296.6,298.2 295.0,299.6 293.3,301.1 291.6,302.4 289.9,300.9 288.3,302.9 286.6,302.9 284.9,304.4 283.2,305.0 281.6,305.1 279.9,315.8 278.2,317.7 276.5,319.1 274.9,319.0 273.2,319.5 271.5,319.1" fill="#c41010" filter="url(#vb)"/></g><polygon points="271.5,316.0 273.8,299.4 276.4,287.3 278.0,292.0 281.6,273.4 284.0,281.0 285.9,287.3 289.7,271.6 291.3,279.0 292.9,285.5 296.3,269.9 297.6,275.0 298.9,280.3 301.9,267.3 304.5,282.0 306.7,294.2 306.7,294.4 305.0,291.8 303.3,293.7 301.7,292.0 300.0,295.5 298.3,295.7 296.6,293.7 295.0,295.1 293.3,296.6 291.6,297.9 289.9,296.4 288.3,298.4 286.6,298.4 284.9,299.9 283.2,300.5 281.6,300.6 279.9,311.3 278.2,313.2 276.5,314.6 274.9,314.5 273.2,315.0 271.5,316.2" fill="url(#pk)"/><polygon points="271.5,316.0 273.8,299.4 276.4,287.3 278.0,292.0 281.6,273.4 284.0,281.0 285.9,287.3 289.7,271.6 291.3,279.0 292.9,285.5 296.3,269.9 297.6,275.0 298.9,280.3 301.9,267.3 304.5,282.0 306.7,294.2 306.7,294.4 305.0,291.8 303.3,293.7 301.7,292.0 300.0,295.5 298.3,295.7 296.6,293.7 295.0,295.1 293.3,296.6 291.6,297.9 289.9,296.4 288.3,298.4 286.6,298.4 284.9,299.9 283.2,300.5 281.6,300.6 279.9,311.3 278.2,313.2 276.5,314.6 274.9,314.5 273.2,315.0 271.5,316.2" fill="url(#psh)"/><clipPath id="pc3"><polygon points="316.2,295.0 318.4,280.0 320.3,266.4 321.2,282.0 322.0,295.0 322.0,304.3 320.1,307.0 318.1,306.7 316.2,305.1"/></clipPath><g clip-path="url(#pc3)"><polygon points="316.2,295.0 318.4,280.0 320.3,266.4 321.2,282.0 322.0,295.0 322.0,295.3 320.1,298.0 318.1,297.7 316.2,296.1" fill="#c41010" filter="url(#vb)"/></g><polygon points="316.2,295.0 318.4,280.0 320.3,266.4 321.2,282.0 322.0,295.0 322.0,295.2 320.1,293.5 318.1,293.2 316.2,295.2" fill="url(#pk)"/><polygon points="316.2,295.0 318.4,280.0 320.3,266.4 321.2,282.0 322.0,295.0 322.0,295.2 320.1,293.5 318.1,293.2 316.2,295.2" fill="url(#psh)"/><text transform="matrix(0.932,-0.362,0.929,0.371,88.5,308.4)" font-size="15" fill="#101820" text-anchor="end" stroke="#101820" stroke-width="0.45">0</text><text transform="matrix(0.932,-0.362,0.929,0.371,110.28333333333333,317.09999999999997)" font-size="15" fill="#101820" text-anchor="end" stroke="#101820" stroke-width="0.45">60</text><text transform="matrix(0.932,-0.362,0.929,0.371,132.06666666666666,325.8)" font-size="15" fill="#101820" text-anchor="end" stroke="#101820" stroke-width="0.45">120</text><text transform="matrix(0.932,-0.362,0.929,0.371,153.84999999999997,334.5)" font-size="15" fill="#101820" text-anchor="end" stroke="#101820" stroke-width="0.45">180</text><text transform="matrix(0.932,-0.362,0.929,0.371,175.63333333333333,343.2)" font-size="15" fill="#101820" text-anchor="end" stroke="#101820" stroke-width="0.45">240</text><text transform="matrix(0.932,-0.362,0.929,0.371,197.41666666666663,351.90000000000003)" font-size="15" fill="#101820" text-anchor="end" stroke="#101820" stroke-width="0.45">300</text><text transform="matrix(0.932,-0.362,0.929,0.371,219.2,360.6)" font-size="15" fill="#101820" text-anchor="end" stroke="#101820" stroke-width="0.45">360</text><text transform="matrix(0.929,0.371,-0.932,0.362,104.7,349.2)" font-size="15.5" fill="#101820" text-anchor="middle" stroke="#101820" stroke-width="0.45">Phase</text><text transform="matrix(0.929,0.371,-0.932,0.362,227.6,360.05)" font-size="15" fill="#101820" text-anchor="start" stroke="#101820" stroke-width="0.45">1</text><text transform="matrix(0.929,0.371,-0.932,0.362,259.975,347.1)" font-size="15" fill="#101820" text-anchor="start" stroke="#101820" stroke-width="0.45">7</text><text transform="matrix(0.929,0.371,-0.932,0.362,292.35,334.15000000000003)" font-size="15" fill="#101820" text-anchor="start" stroke="#101820" stroke-width="0.45">13</text><text transform="matrix(0.929,0.371,-0.932,0.362,324.725,321.2)" font-size="15" fill="#101820" text-anchor="start" stroke="#101820" stroke-width="0.45">19</text><text transform="matrix(0.929,0.371,-0.932,0.362,357.1,308.25)" font-size="15" fill="#101820" text-anchor="start" stroke="#101820" stroke-width="0.45">25</text><text transform="matrix(0.932,-0.362,0.929,0.371,336,347.8)" font-size="15" fill="#101820" text-anchor="middle" stroke="#101820" stroke-width="0.45">Amplitude(mV)</text><text transform="matrix(1.271,-0.270,0.000,0.820,83,295.84)" font-size="10" fill="#101820" text-anchor="end" stroke="#101820" stroke-width="0.55">0.4</text><text transform="matrix(1.271,-0.270,0.000,0.820,83,281.18)" font-size="10" fill="#101820" text-anchor="end" stroke="#101820" stroke-width="0.55">0.8</text><text transform="matrix(1.271,-0.270,0.000,0.820,83,266.52)" font-size="10" fill="#101820" text-anchor="end" stroke="#101820" stroke-width="0.55">1.2</text><text transform="matrix(1.271,-0.270,0.000,0.820,83,251.85999999999999)" font-size="10" fill="#101820" text-anchor="end" stroke="#101820" stroke-width="0.55">1.6</text><text transform="matrix(1.271,-0.270,0.000,0.820,83,237.19999999999996)" font-size="10" fill="#101820" text-anchor="end" stroke="#101820" stroke-width="0.55">2</text><text transform="matrix(0.064,-0.556,1.000,0.040,55.8,282.3)" font-size="14" fill="#101820" text-anchor="middle" stroke="#101820" stroke-width="0.55">Rates(/s)</text>
</svg>
</body></html>
